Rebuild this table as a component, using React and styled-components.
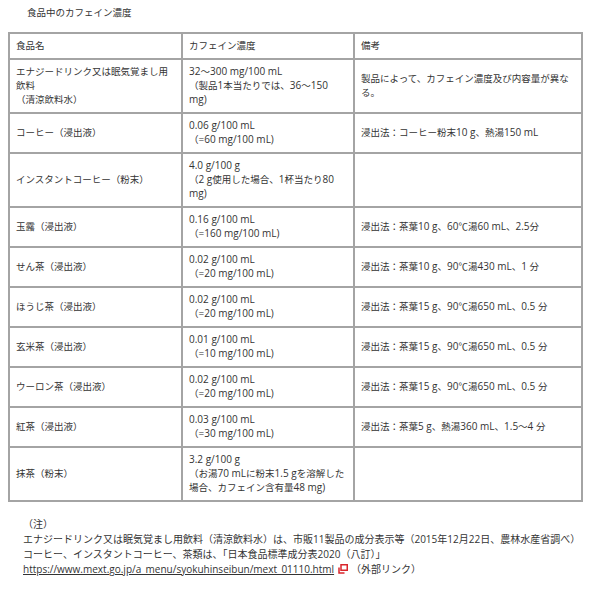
import React from 'react';
import styled, { createGlobalStyle } from 'styled-components';

const GlobalStyle = createGlobalStyle`
  body {
    margin: 0;
    padding: 0;
    background: #fff;
    color: #333;
    font-family: "Open Sans", "Noto Sans CJK JP", sans-serif;
    font-size: 9.5px;
  }
`;

const Page = styled.div`
  padding: 0 8px;
`;

const Title = styled.p`
  margin: 6px 0 12px 19px;
  line-height: 14px;
`;

const Table = styled.table`
  width: 575px;
  border-collapse: collapse;
  table-layout: fixed;
  border: 2px solid #a4a4a4;
`;

const Cell = styled.td`
  border: 2px solid #a4a4a4;
  padding: 5px 6px;
  line-height: 14px;
  vertical-align: middle;
  height: ${p => (p.$head ? '14px' : '28px')};
  white-space: nowrap;
`;

const Latin = styled.span`
  font-size: 10px;
  line-height: 1;
`;

const Notes = styled.div`
  margin-top: 15px;
  padding-left: 15px;
  line-height: 15px;
  font-size: 10px;
`;

const NoteLine = styled.div``;

const Link = styled.a`
  color: #333;
  text-decoration: underline;
`;

const ExtIcon = styled.svg`
  width: 10px;
  height: 10px;
  margin: 0 3px 0 4px;
  vertical-align: -1px;
`;

const rows = [
  [['エナジードリンク又は眠気覚まし用', '飲料', '（清涼飲料水）'], ['32～300 mg/100 mL', '（製品1本当たりでは、36～150', 'mg)'], ['製品によって、カフェイン濃度及び内容量が異な', 'る。']],
  [['コーヒー（浸出液）'], ['0.06 g/100 mL', '（=60 mg/100 mL)'], ['浸出法：コーヒー粉末10 g、熱湯150 mL']],
  [['インスタントコーヒー（粉末）'], ['4.0 g/100 g', '（2 g使用した場合、1杯当たり80', 'mg)'], []],
  [['玉露（浸出液）'], ['0.16 g/100 mL', '（=160 mg/100 mL)'], ['浸出法：茶葉10 g、60℃湯60 mL、2.5分']],
  [['せん茶（浸出液）'], ['0.02 g/100 mL', '（=20 mg/100 mL)'], ['浸出法：茶葉10 g、90℃湯430 mL、1 分']],
  [['ほうじ茶（浸出液）'], ['0.02 g/100 mL', '（=20 mg/100 mL)'], ['浸出法：茶葉15 g、90℃湯650 mL、0.5 分']],
  [['玄米茶（浸出液）'], ['0.01 g/100 mL', '（=10 mg/100 mL)'], ['浸出法：茶葉15 g、90℃湯650 mL、0.5 分']],
  [['ウーロン茶（浸出液）'], ['0.02 g/100 mL', '（=20 mg/100 mL)'], ['浸出法：茶葉15 g、90℃湯650 mL、0.5 分']],
  [['紅茶（浸出液）'], ['0.03 g/100 mL', '（=30 mg/100 mL)'], ['浸出法：茶葉5 g、熱湯360 mL、1.5～4 分']],
  [['抹茶（粉末）'], ['3.2 g/100 g', '（お湯70 mLに粉末1.5 gを溶解した', '場合、カフェイン含有量48 mg)'], []],
];

// ASCII runs are set a touch larger than the kana/kanji around them
const Mixed = ({ text }) =>
  text.split(/([\x20-\x7e]+)/).map((part, i) =>
    i % 2 ? <Latin key={i}>{part}</Latin> : part
  );

const Lines = ({ items }) =>
  items.map((t, i) => (
    <React.Fragment key={i}>
      {i > 0 && <br />}
      <Mixed text={t} />
    </React.Fragment>
  ));

export default function App() {
  return (
    <Page>
      <GlobalStyle />
      <Title>食品中のカフェイン濃度</Title>
      <Table>
        <colgroup>
          <col style={{ width: '173px' }} />
          <col style={{ width: '172px' }} />
          <col />
        </colgroup>
        <tbody>
          <tr>
            <Cell $head>食品名</Cell>
            <Cell $head>カフェイン濃度</Cell>
            <Cell $head>備考</Cell>
          </tr>
          {rows.map((r, i) => (
            <tr key={i}>
              {r.map((c, j) => (
                <Cell key={j}>
                  <Lines items={c} />
                </Cell>
              ))}
            </tr>
          ))}
        </tbody>
      </Table>
      <Notes>
        <NoteLine>（注）</NoteLine>
        <NoteLine>エナジードリンク又は眠気覚まし用飲料（清涼飲料水）は、市販11製品の成分表示等（2015年12月22日、農林水産省調べ）</NoteLine>
        <NoteLine>コーヒー、インスタントコーヒー、茶類は、「日本食品標準成分表2020（八訂）」</NoteLine>
        <NoteLine>
          <Link href="#">https://www.mext.go.jp/a_menu/syokuhinseibun/mext_01110.html</Link>
          <ExtIcon viewBox="0 0 10 10">
            <rect x="3" y="0.75" width="6.25" height="5.5" fill="none" stroke="#d9262c" strokeWidth="1.5" />
            <path d="M1 3.5 V9 H6.5" fill="none" stroke="#d9262c" strokeWidth="1.5" />
          </ExtIcon>
          （外部リンク）
        </NoteLine>
      </Notes>
    </Page>
  );
}
